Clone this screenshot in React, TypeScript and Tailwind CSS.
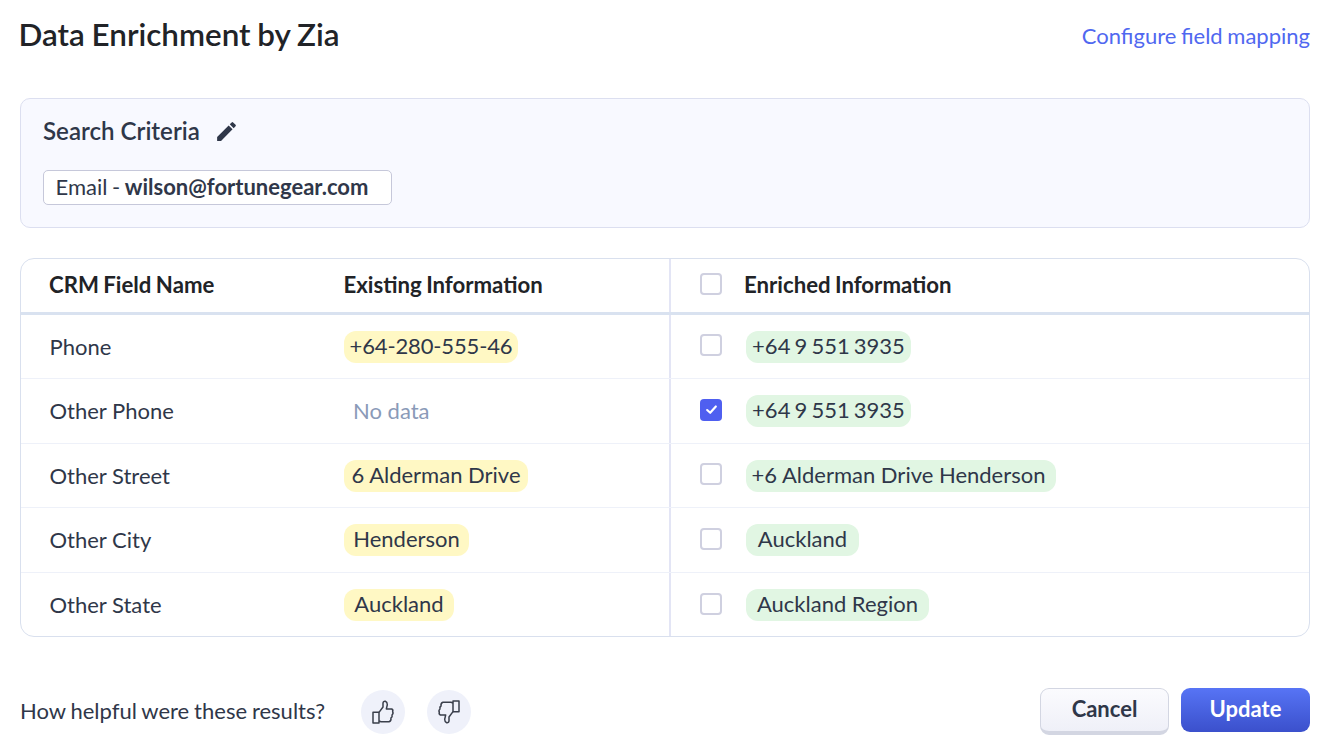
const rows = [
  { field: 'Phone', h: 'h-[64px]', existing: '+64-280-555-46', existingW: 'w-[174px] tracking-[-0.15px]', enriched: '+64 9 551 3935', enrichedW: 'w-[165px] [word-spacing:-1.5px]', checked: false },
  { field: 'Other Phone', h: 'h-[65px]', existing: '', existingW: '', enriched: '+64 9 551 3935', enrichedW: 'w-[165px] [word-spacing:-1.5px]', checked: true },
  { field: 'Other Street', h: 'h-[64px]', existing: '6 Alderman Drive', existingW: 'w-[184px]', enriched: '+6 Alderman Drive Henderson', enrichedW: 'w-[310px] pr-[5px]', checked: false },
  { field: 'Other City', h: 'h-[65px]', existing: 'Henderson', existingW: 'w-[125px]', enriched: 'Auckland', enrichedW: 'w-[113px]', checked: false },
  { field: 'Other State', h: 'h-[64px]', existing: 'Auckland', existingW: 'w-[110px]', enriched: 'Auckland Region', enrichedW: 'w-[183px]', checked: false },
];

function Checkbox({ checked }: { checked?: boolean }) {
  if (checked) {
    return (
      <span className="flex h-[22px] w-[22px] shrink-0 items-center justify-center rounded-[4px] bg-[#4f5ff0]">
        <svg viewBox="0 0 12 12" className="h-[13px] w-[13px]" fill="none" stroke="white" strokeWidth="2" strokeLinecap="round" strokeLinejoin="round">
          <path d="M2 6.5 L4.8 9 L10 3.2" />
        </svg>
      </span>
    );
  }
  return <span className="block h-[22px] w-[22px] shrink-0 rounded-[4px] border-2 border-[#cfd0e0] bg-white" />;
}

// thumb drawn by hand, the down one is the same shape turned round
function Thumb({ down }: { down?: boolean }) {
  return (
    <svg viewBox="50 40 72 78" className={`h-[26px] w-[24px] ${down ? 'rotate-180' : ''}`} fill="none" stroke="#3a3f4b" strokeWidth="4.5" strokeLinejoin="round">
      <path d="M56 80 H74 V112 H56 Z" />
      <path d="M74 80 L86 64 V52 Q87 46 93 47 Q99 49 99 57 L96 70 H112 Q117 72 115 78 Q118 84 113 88 Q115 94 110 97 Q111 106 104 108 H80 L74 106" />
    </svg>
  );
}

export default function App() {
  return (
    <div className="h-[752px] w-[1328px] overflow-hidden bg-white px-[20px] font-['Lato','Liberation_Sans',sans-serif] text-[#2f3749]">
      <div className="flex h-[98px] w-[1290px] items-start justify-between pt-[12px]">
        <h1 className="-ml-[1.5px] text-[31.4px] leading-[44px] font-semibold text-[#212327] [word-spacing:-1px]">Data Enrichment by Zia</h1>
        <a className="pt-[6px] text-[22px] leading-[36px] text-[#5068f0] [word-spacing:-1px]">Configure field mapping</a>
      </div>

      <div className="h-[130px] w-[1290px] rounded-[10px] border border-[#dcdff0] bg-[#f8f9ff] px-[22px] pt-[16px]">
        <div className="flex h-[32px] items-center">
          <span className="text-[24.1px] font-semibold">Search Criteria</span>
          <svg viewBox="0 0 24 24" className="ml-[14px] h-[25px] w-[25px]" fill="#2f3749">
            <path d="M3 17.25V21h3.75L17.81 9.94l-3.75-3.75L3 17.25zM20.71 7.04a1 1 0 0 0 0-1.41l-2.34-2.34a1 1 0 0 0-1.41 0l-1.83 1.83 3.75 3.75 1.83-1.83z" />
          </svg>
        </div>
        <div className="mt-[23px] flex h-[35px] w-[349px] items-center rounded-[5px] border border-[#c6c8da] bg-white pr-3 pb-[2px] pl-[11.5px] text-[22px] [word-spacing:-1px]">
          <span>Email -&nbsp;</span>
          <span className="font-bold">wilson@fortunegear.com</span>
        </div>
      </div>

      <div className="mt-[30px] h-[379px] w-[1290px] overflow-hidden rounded-[14px] border border-[#d9e0ee]">
        <div className="flex h-[56px] border-b-[3px] border-[#d9e2f0] text-[22.2px] font-bold text-[#212327] [word-spacing:-1px]">
          <div className="w-[294px] pl-[28px] leading-[52px]">CRM Field Name</div>
          <div className="w-[356px] border-r-2 border-[#e3e5f5] pl-[28.5px] leading-[52px]">Existing Information</div>
          <div className="flex items-center pb-[3px] pl-[29px]">
            <Checkbox />
            <span className="ml-[22px] self-start leading-[52px]">Enriched Information</span>
          </div>
        </div>
        {rows.map((row, i) => (
          <div key={row.field} className={`flex text-[22px] ${row.h} ${i < rows.length - 1 ? 'border-b border-[#eef1f9]' : ''}`}>
            <div className="flex w-[294px] items-center pb-[1px] pl-[28.5px]">{row.field}</div>
            <div className="flex w-[356px] items-center border-r-2 border-[#e3e5f5] pl-[29px]">
              {row.existing ? (
                <span className={`rounded-[12px] bg-[#fff8c4] pb-[2px] text-center leading-[30px] ${row.existingW}`}>{row.existing}</span>
              ) : (
                <span className="pb-[1px] pl-[9px] text-[#8a9ab8]">No data</span>
              )}
            </div>
            <div className="flex items-center pl-[29px]">
              <span className="-mt-[3px]">
                <Checkbox checked={row.checked} />
              </span>
              <span className={`ml-[24px] rounded-[12px] bg-[#e1f6e3] pb-[2px] text-center leading-[30px] ${row.enrichedW}`}>{row.enriched}</span>
            </div>
          </div>
        ))}
      </div>

      <div className="mt-[51px] flex h-[48px] w-[1290px] items-center justify-between">
        <div className="flex items-center">
          <span className="pb-[2px] text-[22px] leading-[46px] [word-spacing:-0.75px]">How helpful were these results?</span>
          <span className="ml-[36px] flex h-[44px] w-[44px] items-center justify-center rounded-full bg-[#eff1fa]">
            <Thumb />
          </span>
          <span className="ml-[22px] flex h-[44px] w-[44px] items-center justify-center rounded-full bg-[#eff1fa]">
            <Thumb down />
          </span>
        </div>
        <div className="-mt-[2px] flex items-start gap-[12px]">
          <button className="h-[47px] w-[129px] rounded-[9px] border border-[#d3d6e2] border-b-[4px] bg-gradient-to-b from-[#fbfbfe] to-[#eff0f8] pb-[2px] text-[22px] font-bold text-[#2f3749]">Cancel</button>
          <button className="h-[44px] w-[129px] rounded-[9px] bg-gradient-to-b from-[#5774f5] to-[#3b50cc] pb-[2px] text-[22px] font-bold text-white">Update</button>
        </div>
      </div>
    </div>
  );
}
